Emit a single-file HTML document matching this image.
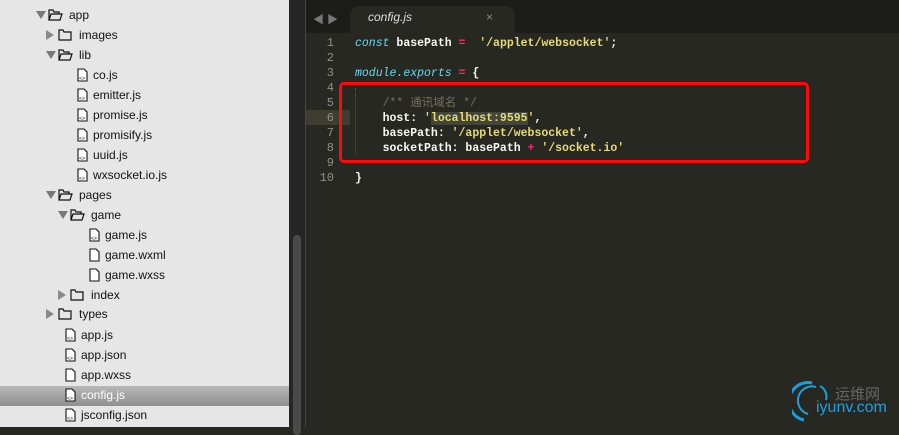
<!DOCTYPE html><html><head><meta charset="utf-8"><style>
body{margin:0;width:899px;height:427px;overflow:hidden;background:#272822;position:relative;font-family:"Liberation Sans","Noto Sans CJK SC",sans-serif}
#side{position:absolute;left:0;top:0;width:289px;height:427px;background:#e6e6e6}
.r{position:absolute;height:20px;line-height:20px;font-size:12px;color:#111;white-space:nowrap}
.sel{position:absolute;left:0;top:386px;width:289px;height:20px;background:linear-gradient(#b8b8b8,#8f8f8f)}
.tri{position:absolute;width:0;height:0}
.td{border-left:5px solid transparent;border-right:5px solid transparent;border-top:8px solid #777}
.tr{border-top:5px solid transparent;border-bottom:5px solid transparent;border-left:8px solid #888}
#strip{position:absolute;left:289px;top:0;width:16px;height:427px;background:#262626;border-right:1px solid #444}
#thumb{position:absolute;left:293px;top:235px;width:8px;height:200px;background:#4a4a4a;border-radius:4px}
#tabbar{position:absolute;left:306px;top:0;right:0;height:33px;background:#1c1d19}
#tab{position:absolute;left:350px;top:6px;width:165px;height:27px;background:#272822;border-radius:10px 10px 0 0}
.code{position:absolute;left:0;font-family:"Liberation Mono",monospace;font-size:11.5px;font-weight:bold;height:15px;line-height:15px;white-space:pre;color:#f8f8f2}
.ln{position:absolute;left:306px;width:28px;text-align:right;color:#8f908a;font-family:"Liberation Mono",monospace;font-size:12px;height:15px;line-height:15px}
.k{color:#66d9ef;font-style:italic;font-weight:normal}.s{color:#e6db74}.o{color:#f92672}.c{color:#75715e;font-weight:normal}
</style></head><body>
<div id="side">
<div class="sel"></div>
<div style="position:absolute;left:36px;top:-6px;width:50px;height:8px;background:#222;opacity:.0"></div>
</div>
<div id="strip"></div><div id="thumb"></div>
<div id="tabbar"></div><div id="tab"></div>
<div style="position:absolute;left:313px;top:11px;color:#777;font-size:11px">◀ ▶</div>
<div style="position:absolute;left:368px;top:10px;color:#ddd;font-size:12px;font-style:italic">config.js</div>
<div style="position:absolute;left:486px;top:10px;color:#888;font-size:12px">×</div>
<div style="position:absolute;left:306px;top:110px;width:44px;height:15px;background:#3e3d32"></div>
<div id="rows"></div>
<script>
var rows=[["app",40,1,"d",15],["images",50,1,"r",35],["lib",50,1,"d",55],["co.js",77,0,"js",75],["emitter.js",77,0,"js",95],["promise.js",77,0,"js",115],["promisify.js",77,0,"js",135],["uuid.js",77,0,"js",155],["wxsocket.io.js",77,0,"js",175],["pages",50,1,"d",195],["game",62,1,"d",215],["game.js",89,0,"js",235],["game.wxml",89,0,"f",255],["game.wxss",89,0,"f",275],["index",62,1,"r",295],["types",50,1,"r",314],["app.js",65,0,"js",335],["app.json",65,0,"js",355],["app.wxss",65,0,"f",375],["config.js",65,0,"js",395],["jsconfig.json",65,0,"js",415]];
var h="";
rows.forEach(function(r){var y=r[4]-10,x=r[1];
if(r[2]){h+='<div class="tri '+(r[3]=="d"?"td":"tr")+'" style="position:absolute;left:'+(x-4)+'px;top:'+(y+(r[3]=="d"?6:5))+'px"></div>';
h+='<svg style="position:absolute;left:'+(x+8)+'px;top:'+(y+4)+'px" width="15" height="12"><path d="'+(r[3]=="d"?"M1 11V1h4l1 2h5v2M1 11l2-6h11l-2 6z":"M1 1h4l1 2h7v8H1z")+'" fill="none" stroke="#111" stroke-width="1.2"/></svg>';
h+='<div class="r" style="left:'+(x+29)+'px;top:'+y+'px">'+r[0]+'</div>';}
else{h+='<svg style="position:absolute;left:'+x+'px;top:'+(y+3)+'px" width="11" height="14"><path d="M1 1h6l3 3v9H1z" fill="#fff" stroke="#111" stroke-width="1.1"/>'+(r[3]=="js"?'<text x="2" y="12" font-size="5" font-family="Liberation Mono">&lt;&gt;</text>':'')+'</svg>';
h+='<div class="r" style="left:'+(x+16)+'px;top:'+y+'px;'+(r[0]=="config.js"?"color:#fff":"")+'">'+r[0]+'</div>';}
});
var code=['<span class="k">const</span> basePath <span class="o">=</span>  <span class="s">\'/applet/websocket\'</span>;','','<span class="k">module</span><span class="k">.exports</span> <span class="o">=</span> {','','    <span class="c">/** 通讯域名 */</span>','    host: <span class="s">\'<span style="background:#44453a">localhost:9595</span>\'</span>,','    basePath: <span class="s">\'/applet/websocket\'</span>,','    socketPath: basePath <span class="o">+</span> <span class="s">\'/socket.io\'</span>','','}'];
code.forEach(function(c,i){var y=36+i*15;h+='<div class="ln" style="top:'+y+'px">'+(i+1)+'</div><div class="code" style="left:355px;top:'+y+'px">'+c+'</div>';});
document.getElementById("rows").innerHTML=h;
</script>
<div style="position:absolute;left:339px;top:82px;width:464px;height:75px;border:3px solid #ff0a0a;border-radius:5px"></div>
<div style="position:absolute;left:355px;top:88px;height:66px;border-left:1px dotted #555"></div>
<svg style="position:absolute;left:792px;top:380px" width="40" height="44"><path d="M20 3A18 18 0 0 0 12 40" fill="none" stroke="#1aa0e0" stroke-width="3"/><path d="M24 7A14 14 0 0 0 16 34" fill="none" stroke="#1aa0e0" stroke-width="2"/><path d="M28 6A12 12 0 0 1 34 20" fill="none" stroke="#1aa0e0" stroke-width="2"/></svg>
<div style="position:absolute;left:835px;top:383px;color:#666;font-size:15px">运维网</div>
<div style="position:absolute;left:816px;top:399px;color:#1aa0e0;font-size:16px">iyunv.com</div>
</body></html>
